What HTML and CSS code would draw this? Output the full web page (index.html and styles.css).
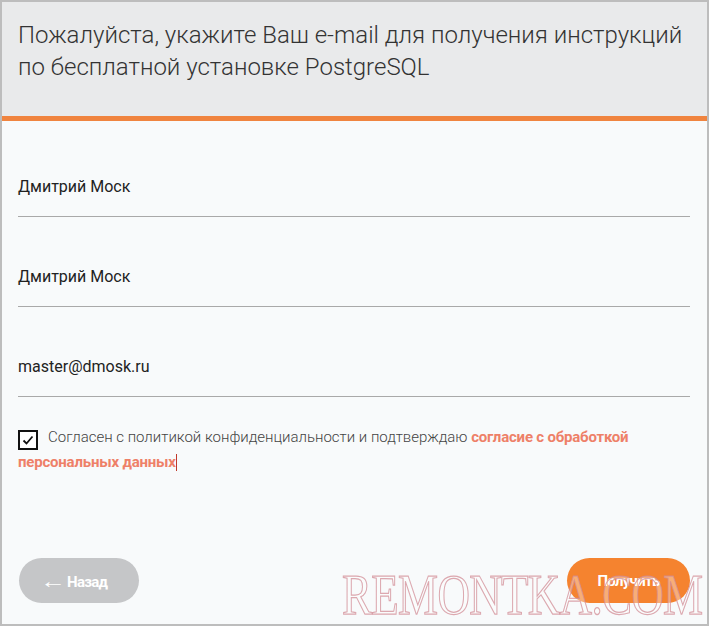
FILE: index.html
```html
<!DOCTYPE html>
<html lang="ru">
<head>
    <meta charset="UTF-8">
    <title>Установка PostgreSQL</title>
    <link rel="stylesheet" href="styles.css">
</head>
<body>
    <div class="frame">
        <header class="head">
            <h1>Пожалуйста, укажите Ваш e-mail для получения инструкций по бесплатной установке PostgreSQL</h1>
        </header>

        <form class="form">
            <div class="field">Дмитрий Моск</div>
            <div class="field">Дмитрий Моск</div>
            <div class="field">master@dmosk.ru</div>

            <p class="agree">
                <span class="check">
                    <svg width="12" height="12" viewBox="0 0 12 12"><path d="M1.5 6.5 L4.5 9.5 L10.5 2.5" fill="none" stroke="#111" stroke-width="1.8"/></svg>
                </span>Согласен с политикой конфиденциальности и подтверждаю <a href="#">согласие с обработкой персональных данных</a><span class="caret"></span>
            </p>

            <div class="actions">
                <button type="button" class="btn btn-back"><span class="arrow">&larr;</span>Назад</button>
                <button type="button" class="btn btn-get">Получить</button>
            </div>
        </form>

        <div class="watermark">REMONTKA.COM</div>
    </div>
</body>
</html>
```

FILE: styles.css
```css
body, html {
    margin: 0;
    padding: 0;
    font-family: Roboto, "Noto Sans", sans-serif;
}
.frame {
    position: relative;
    height: 626px;
    box-sizing: border-box;
    border: 2px solid #bdbdbd;
    background: #f8fafb;
    overflow: hidden;
}
.head {
    background: #e9eaeb;
    padding: 17px 16px 33px;
    border-bottom: 5px solid #f0843f;
}
.head h1 {
    margin: 0;
    font-size: 24px;
    font-weight: 300;
    line-height: 32px;
    color: #333;
}
.form {
    padding: 54px 17px 0 16px;
}
.field {
    font-size: 16px;
    line-height: 24px;
    color: #222;
    padding-bottom: 17px;
    border-bottom: 1px solid #a9a9a9;
    margin-bottom: 48px;
}
.field:nth-child(3) {
    margin-bottom: 28px;
}
.agree {
    margin: 0;
    font-size: 15px;
    font-weight: 300;
    line-height: 24px;
    color: #444;
}
.check {
    display: inline-flex;
    align-items: center;
    justify-content: center;
    width: 16px;
    height: 16px;
    border: 2px solid #111;
    margin-right: 10px;
    vertical-align: -4px;
    background: #fff;
}
.agree a {
    color: #ee8068;
    font-weight: 700;
    letter-spacing: -0.2px;
    text-decoration: none;
}
.caret {
    display: inline-block;
    width: 1px;
    height: 17px;
    background: #c0392b;
    vertical-align: -4px;
}
.actions {
    display: flex;
    justify-content: space-between;
    margin-top: 84px;
    padding-left: 1px;
}
.btn {
    border: none;
    border-radius: 23px;
    height: 45px;
    font-family: Roboto, sans-serif;
    font-weight: 700;
    font-size: 15px;
    letter-spacing: -0.7px;
    color: #fff;
    cursor: pointer;
}
.arrow {
    display: inline-block;
    font-weight: 300;
    font-size: 20px;
    transform: scaleX(1.3);
    margin-right: 5px;
    vertical-align: -1px;
}
.btn-back {
    width: 120px;
    padding-right: 14px;
    background: #c5c6c8;
}
.btn-get {
    width: 123px;
    background: #f5832f;
}
.watermark {
    position: absolute;
    left: 340px;
    top: 561px;
    font-family: "Liberation Serif", serif;
    font-size: 45px;
    letter-spacing: -0.7px;
    transform: scaleY(1.25);
    transform-origin: top left;
    color: rgba(255, 255, 255, 0.35);
    -webkit-text-stroke: 1px rgba(210, 140, 150, 0.75);
    pointer-events: none;
}
```
